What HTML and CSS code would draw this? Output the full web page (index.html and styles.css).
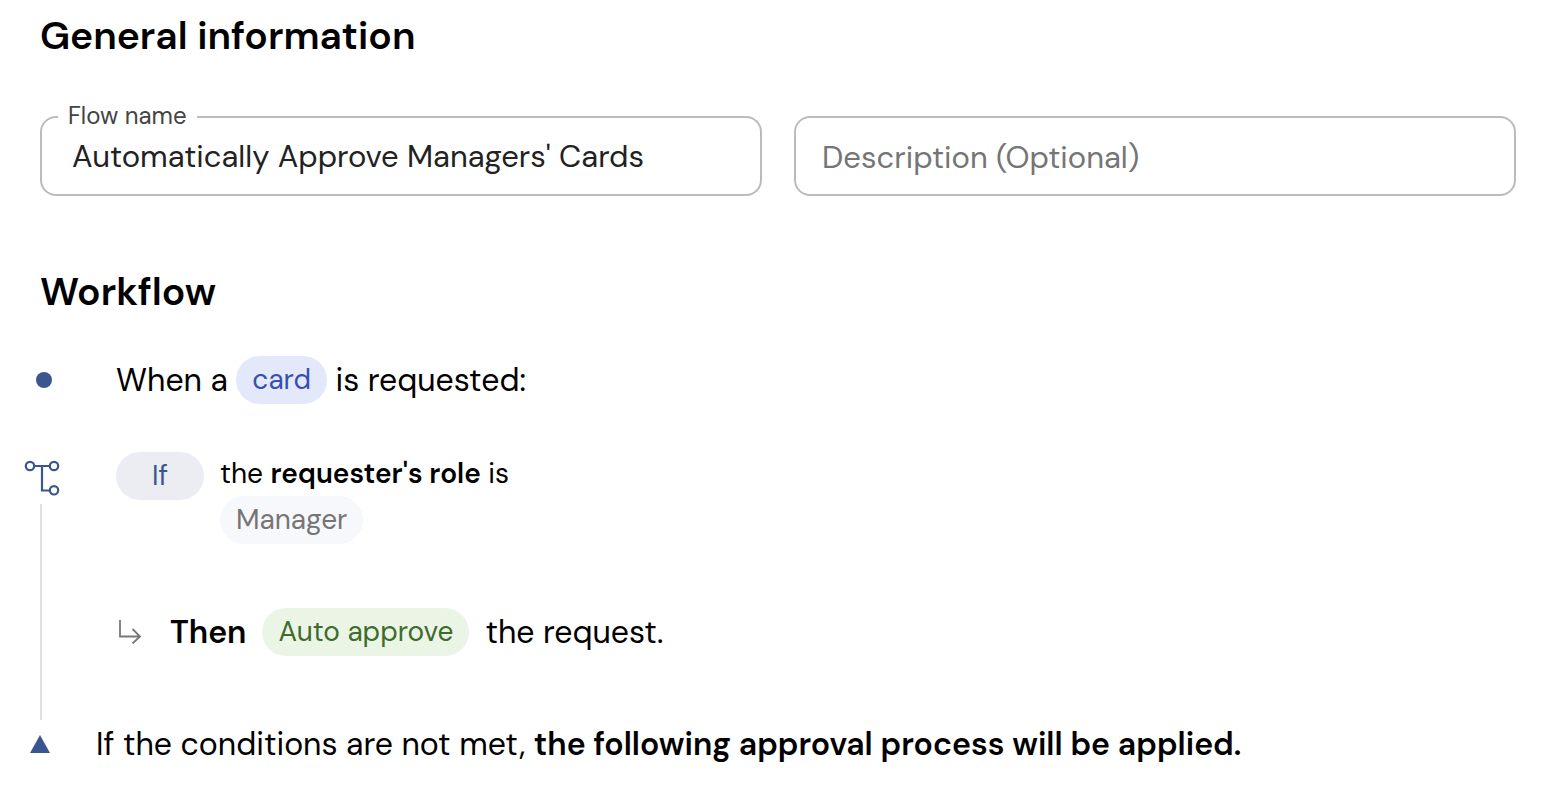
FILE: index.html
```html
<!DOCTYPE html>
<html lang="en">
<head>
<meta charset="utf-8">
<title>Approval flow</title>
<link rel="stylesheet" href="styles.css">
</head>
<body>
<main class="page">
  <h2 class="heading">General information</h2>
  <form class="fields">
    <div class="field">
      <label class="field-label" for="flow-name">Flow name</label>
      <input class="field-input" id="flow-name" type="text" value="Automatically Approve Managers' Cards">
    </div>
    <div class="field">
      <input class="field-input field-input-empty" type="text" placeholder="Description (Optional)" aria-label="Description (Optional)">
    </div>
  </form>

  <h2 class="heading workflow-heading">Workflow</h2>
  <section class="workflow">
    <div class="step">
      <div class="rail rail-start"><span class="dot"></span></div>
      <p class="sentence trigger">When a <span class="chip chip-card">card</span> is requested:</p>
    </div>

    <div class="step">
      <div class="rail rail-branch">
        <svg class="branch-icon" viewBox="0 0 36 36" fill="none" stroke="#3b5590" stroke-width="2.2" aria-hidden="true">
          <path d="M10 6H25M18 5V30.5H25"/>
          <circle cx="6" cy="6" r="4.2"/>
          <circle cx="30" cy="6" r="4.2"/>
          <circle cx="30" cy="30.3" r="4.2"/>
        </svg>
        <span class="line"></span>
      </div>
      <div class="branch">
        <div class="condition">
          <span class="chip chip-if">If</span>
          <div class="condition-body">
            <p class="condition-text">the <strong>requester's role</strong> is</p>
            <span class="chip chip-value">Manager</span>
          </div>
        </div>
        <div class="sentence action">
          <svg class="arrow-icon" viewBox="0 0 26 24" fill="none" stroke="#777" stroke-width="1.8" aria-hidden="true">
            <path d="M4 0V16.5H24M16.5 9L24 16.5L16.5 23.5"/>
          </svg>
          <strong>Then</strong>
          <span class="chip chip-approve">Auto approve</span>
          <span>the request.</span>
        </div>
      </div>
    </div>

    <div class="step step-end">
      <div class="rail rail-end">
        <svg class="triangle-icon" viewBox="0 0 20 18" aria-hidden="true"><path d="M10 0L20 18H0Z" fill="#3b5590"/></svg>
      </div>
      <p class="sentence">If the conditions are not met, <strong>the following approval process will be applied.</strong></p>
    </div>
  </section>
</main>
</body>
</html>
```
FILE: styles.css
```css
* { box-sizing: border-box; }

body {
  margin: 0;
  background: #fff;
  color: #000;
  font-family: "DM Sans", Inter, "Liberation Sans", sans-serif;
}

p { margin: 0; }
strong { font-weight: 600; }

.page { padding: 12px 32px 32px 40px; }

.heading {
  margin: 0;
  font-size: 39px;
  line-height: 48px;
  font-weight: 600;
}
.workflow-heading { margin-top: 72px; }

.fields {
  display: grid;
  grid-template-columns: 1fr 1fr;
  gap: 32px;
  margin-top: 56px;
}
.field { position: relative; }
.field-label {
  position: absolute;
  top: -16px;
  left: 18px;
  padding: 0 10px;
  background: #fff;
  color: #444;
  font-size: 24px;
  line-height: 32px;
}
.field-input {
  display: block;
  width: 100%;
  height: 80px;
  padding: 0 30px;
  border: 2px solid #bbb;
  border-radius: 16px;
  background: #fff;
  color: #222;
  font: inherit;
  font-size: 31px;
}
.field-input-empty { padding: 2px 26px 0; }
.field-input::placeholder { color: #757575; opacity: 1; }

.workflow {
  display: flex;
  flex-direction: column;
  gap: 48px;
  margin-top: 40px;
  margin-left: -16px;
}
.step { display: flex; }
.step-end { margin-top: -48px; }
.rail {
  display: flex;
  flex: none;
  width: 92px;
}
.rail-start {
  align-items: center;
  padding-left: 12px;
}
.rail-branch {
  flex-direction: column;
  gap: 8px;
  padding-top: 8px;
}
.rail-end {
  align-items: center;
  width: 72px;
  padding-left: 6px;
}
.dot {
  width: 16px;
  height: 16px;
  border-radius: 50%;
  background: #3b5590;
}
.branch-icon { width: 36px; height: 36px; }
.line {
  flex: 1;
  width: 2px;
  margin-left: 16px;
  background: #e0e0e0;
}
.triangle-icon { width: 20px; height: 18px; }

.sentence {
  font-size: 32px;
  line-height: 48px;
}
.trigger, .action {
  display: flex;
  align-items: center;
  white-space: pre;
}
.chip {
  display: inline-block;
  padding: 0 16px;
  border-radius: 24px;
  font-size: 28px;
  line-height: 48px;
}
.chip-card { background: #e3e9fb; color: #3450b0; }
.chip-if {
  width: 88px;
  background: #ecedf3;
  color: #3b5590;
  text-align: center;
}
.chip-value { background: #f7f8fb; color: #757575; }
.chip-approve { background: #eaf5e6; color: #3f6b2d; }

.branch {
  display: flex;
  flex-direction: column;
  gap: 64px;
  padding-bottom: 64px;
}
.condition {
  display: flex;
  align-items: flex-start;
  gap: 16px;
}
.condition-text {
  font-size: 28px;
  line-height: 44px;
}
.action { gap: 16px; }
.arrow-icon {
  width: 26px;
  height: 24px;
  margin-right: 12px;
}
```
